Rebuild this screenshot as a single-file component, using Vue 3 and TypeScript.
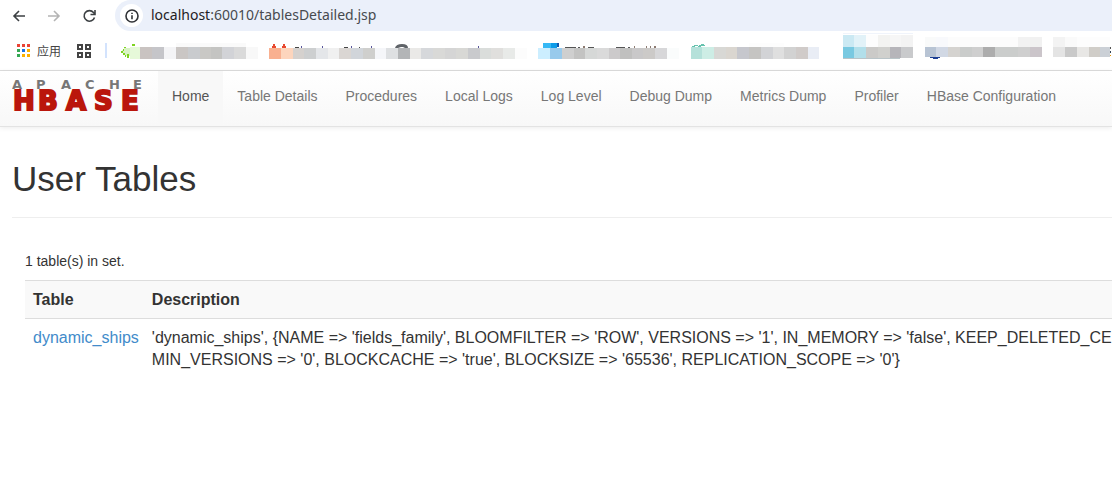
<script setup lang="ts">
interface Block {
  x: number
  y: number
  w: number
  h: number
  fill: string
}
interface Bookmark {
  label: string
  left: number
  width: number
  blocks: Block[]
}

function strip(edges: number[], colors: string[], y: number, h: number): Block[] {
  return colors.map((fill, i) => ({
    x: edges[i] - edges[0],
    y,
    w: edges[i + 1] - edges[i],
    h,
    fill,
  }))
}

const bookmarks: Bookmark[] = [
  {
    label: 'Bookmark 1', left: 121, width: 137,
    blocks: [
      { x: 55, y: 10, w: 70, h: 4, fill: '#fafafa' },
      ...strip(
        [121, 130, 140, 152, 164, 176, 188, 200, 211, 222, 234, 246, 258],
        ['none', '#e6f9d9', '#c9c3c1', '#c5c5c9', '#f4f4f6', '#cac6c4', '#c9cbce', '#c9c8c5', '#c4c4c2', '#d2d3d7', '#dadada', '#f8f8f8'],
        14, 12),
    ],
  },
  {
    label: 'Bookmark 2', left: 269, width: 258,
    blocks: strip(
      [269, 281, 293, 304, 316, 328, 339, 351, 363, 375, 386, 398, 410, 421, 433, 445, 456, 468, 480, 491, 503, 515, 527],
      ['#f9b090', '#fdd5bd', '#d5d1ce', '#cdcfd0', '#e4e6e9', '#f0f0f0', '#dad6d3', '#d1d5da', '#cfcfcd', '#f5f6f9', '#dee0e2', '#b3b5b7', '#eae9e7', '#d6d8db', '#d9d9d7', '#d5d5d5', '#d8d8d5', '#c9cacd', '#dadddb', '#e0dfdd', '#e8eae8', '#fcfcfc'],
      15, 11),
  },
  {
    label: 'Bookmark 3', left: 538, width: 141,
    blocks: strip(
      [538, 550, 562, 574, 585, 597, 609, 620, 632, 643, 655, 667, 679],
      ['#cceeff', '#98caec', '#cfcfcf', '#c3c3c2', '#d6d8d7', '#dadada', '#cccacb', '#c0c0bf', '#c9c8c9', '#cccac8', '#d7d7d9', '#fafcfc'],
      15, 11),
  },
  {
    label: 'Bookmark 4', left: 691, width: 128,
    blocks: [
      { x: 58, y: 10, w: 35, h: 4, fill: '#fdfdfd' },
      ...strip(
        [691, 702, 714, 726, 737, 749, 761, 773, 784, 796, 808, 819],
        ['#b5e1da', '#cdede5', '#d8d8d5', '#dad6d0', '#c6c7cd', '#c5c4c2', '#d2d3d6', '#dfdfdf', '#d2d2d2', '#d0cbc9', '#e9edf5'],
        14, 12),
    ],
  },
  {
    label: 'Bookmark 5', left: 843, width: 70,
    blocks: [
      { x: 0, y: 0, w: 70, h: 1, fill: '#f0f4fb' },
      ...strip([843, 854, 866, 878, 890, 901, 913], ['#cbe9f3', '#e2f2f8', '#fdfdfd', '#f3f3f1', '#f6f6f6', '#f3f3f3'], 2, 12),
      ...strip([843, 854, 866, 878, 890, 901, 913], ['#79c9e1', '#b2dfea', '#cbcac8', '#d0d0cd', '#b6b5ba', '#c9cacc'], 14, 11),
      { x: 0, y: 25, w: 57, h: 1, fill: '#b9c4c8' },
    ],
  },
  {
    label: 'Bookmark 6', left: 925, width: 117,
    blocks: [
      ...strip([925, 936, 948, 1018, 1030, 1042], ['#f9fafa', '#f8f9fc', '#fcfcfc', '#f2f2f2', '#f1f1f1'], 4, 10),
      ...strip(
        [925, 936, 948, 960, 972, 983, 995, 1018, 1030, 1042],
        ['#b8c4d4', '#d1d8e4', '#d5d3d0', '#cacccb', '#cfcfcf', '#adadad', '#cbcdcc', '#cfcfcf', '#cbc5ca'],
        14, 10),
    ],
  },
  {
    label: 'Bookmark 7', left: 1053, width: 59,
    blocks: [
      ...strip([1053, 1065, 1077, 1110], ['#f3f3f3', '#fafafa', '#fdfdfd'], 4, 10),
      ...strip([1053, 1065, 1077, 1089, 1100, 1110], ['#e4e4e4', '#c9c9c9', '#e8e7e5', '#d0cdc8', '#cbd0d6'], 14, 10),
      { x: 57, y: 14, w: 1, h: 2, fill: '#555' },
      { x: 57, y: 18, w: 1, h: 2, fill: '#345' },
      { x: 57, y: 22, w: 1, h: 1, fill: '#e90' },
    ],
  },
]

function gapBefore(i: number): number {
  return i === 0 ? 0 : bookmarks[i].left - bookmarks[i - 1].left - bookmarks[i - 1].width
}

const dots = ['#ea4335', '#ea4335', '#ea4335', '#34a853', '#1a73e8', '#fbb000', '#34a853', '#fbb000', '#fbb000']

const links = [
  'Home', 'Table Details', 'Procedures', 'Local Logs', 'Log Level',
  'Debug Dump', 'Metrics Dump', 'Profiler', 'HBase Configuration',
]
</script>

<template>
  <div class="page">
    <header class="toolbar">
      <button class="tool" type="button" aria-label="Back">
        <svg width="14" height="14" viewBox="0 0 14 14"><path d="M13 7H2M7 2 2 7l5 5" stroke="#3c4043" /></svg>
      </button>
      <button class="tool" type="button" aria-label="Forward">
        <svg width="14" height="14" viewBox="0 0 14 14"><path d="M1 7h11M7 2l5 5-5 5" stroke="#b4b4b4" /></svg>
      </button>
      <button class="tool" type="button" aria-label="Reload">
        <svg width="14" height="14" viewBox="0 0 14 14"><path d="M12.500 8.500A5.300 5.300 0 1 1 11.500 3.500L13 5M13 1v4.500H8.500" stroke="#3c4043" /></svg>
      </button>
      <div class="address">
        <button class="info" type="button" aria-label="Site information">
          <svg width="14" height="14" viewBox="0 0 14 14">
            <circle cx="7" cy="7" r="6" stroke="#303236" />
            <path d="M7 6.300V10.300M7 3.700v1.300" stroke="#303236" />
          </svg>
        </button>
        <div class="url"><span class="host">localhost</span>:60010/tablesDetailed.jsp</div>
      </div>
    </header>

    <nav class="bookmarks" aria-label="Bookmarks">
      <a href="#" class="apps">
        <svg width="13" height="13" viewBox="0 0 13 13">
          <rect v-for="(c, i) in dots" :key="i" :x="(i % 3) * 5" :y="Math.floor(i / 3) * 5" width="3" height="3" :fill="c" />
        </svg>
        <span>应用</span>
      </a>
      <button class="groups" type="button" aria-label="Tab groups">
        <svg width="14" height="14" viewBox="0 0 14 14">
          <path d="M1 1h4v4H1zM9 1h4v4H9zM1 9h4v4H1zM9 9h4v4H9z" stroke="#444" stroke-width="2" />
        </svg>
      </button>
      <span class="divider"></span>
      <a
        v-for="(b, i) in bookmarks" :key="b.label" href="#" class="mark"
        :aria-label="b.label" :style="{ marginLeft: gapBefore(i) + 'px' }"
      >
        <svg :width="b.width" height="28" :viewBox="`0 0 ${b.width} 28`" shape-rendering="crispEdges">
          <rect v-for="(r, k) in b.blocks" :key="k" :x="r.x" :y="r.y" :width="r.w" :height="r.h" :fill="r.fill" />
          <g v-if="i === 0">
            <path d="M3 15h6v8H5l-3-3-1-2z" fill="#d9f3c4" />
            <path d="M0 18h2v2H0zM2 16h1v2H2zM2 20h2v2H2zM4 22h1v2H4zM6 21h2v4H6zM11 11h3v2h-3zM3 14h2v1H3z" fill="#7ed321" />
          </g>
          <g v-if="i === 1">
            <path d="M4 11h2l1 4H3zM14 11h2l1 4h-4z" fill="#e8492f" />
            <path d="M26 14h4v1h-4zM75 14h4v1h-4zM90 14h1v1h-1z" fill="#444" />
            <path d="M32 13h1v2h-1zM53 13h1v2h-1zM82 13h1v2h-1zM102 13h1v2h-1zM209 13h1v2h-1z" fill="#57549a" />
            <path d="M126 15q1-4 7-4t6 4h-3l-2-1h-2l-3 1z" fill="#5f6368" shape-rendering="auto" />
          </g>
          <g v-if="i === 2">
            <path d="M5 10h8v5H5z" fill="#35b8f5" />
            <path d="M13 10h6v5h-6z" fill="#0c9be8" />
            <path d="M19 10h2v4h-2z" fill="#1259ae" />
            <path d="M27 14h11v1H27zM40 14h2v1h-2zM50 14h6v1h-6zM78 14h9v1h-9zM90 14h2v1h-2z" fill="#555" />
            <path d="M45 13h2v2h-2zM96 13h1v2h-1zM108 13h1v2h-1zM112 13h1v2h-1zM116 13h2v2h-2z" fill="#8c7a70" />
          </g>
          <path v-if="i === 3" d="M3 12h4v1H3zM1 13h3v1H1zM10 11h3v1h-3zM8 12h6v1H8zM7 13h3v1H7z" fill="#66c2ae" />
          <path v-if="i === 5" d="M5 24h10v1h-2v1H8v-1H5z" fill="#1c3f94" />
        </svg>
      </a>
    </nav>

    <nav class="navbar" aria-label="HBase">
      <a href="#" class="brand">
        <svg width="136" height="40" viewBox="0 0 136 40" role="img" aria-label="Apache HBase">
          <text class="apache" x="0 24 49 73 97 121" y="11">APACHE</text>
          <text class="hbase" x="1 26 54 82 109" y="32">HBASE</text>
        </svg>
      </a>
      <ul>
        <li v-for="(l, i) in links" :key="l"><a href="#" :class="{ active: i === 0 }">{{ l }}</a></li>
      </ul>
    </nav>

    <main>
      <h1>User Tables</h1>
      <section>
        <p>1 table(s) in set.</p>
        <table>
          <thead>
            <tr><th scope="col">Table</th><th scope="col">Description</th></tr>
          </thead>
          <tbody>
            <tr>
              <td><a href="#">dynamic_ships</a></td>
              <td>
                'dynamic_ships', {NAME =&gt; 'fields_family', BLOOMFILTER =&gt; 'ROW', VERSIONS =&gt; '1', IN_MEMORY =&gt; 'false', KEEP_DELETED_CELLS<br>
                MIN_VERSIONS =&gt; '0', BLOCKCACHE =&gt; 'true', BLOCKSIZE =&gt; '65536', REPLICATION_SCOPE =&gt; '0'}
              </td>
            </tr>
          </tbody>
        </table>
      </section>
    </main>
  </div>
</template>

<style>
body {
  margin: 0;
  background: #fff;
}
</style>

<style scoped>
.page {
  overflow: hidden;
  font-family: "Liberation Sans", Arial, sans-serif;
  font-size: 14px;
  line-height: 20px;
  color: #333;
}
svg {
  display: block;
  fill: none;
  flex: none;
}
button {
  display: flex;
  align-items: center;
  justify-content: center;
  padding: 0;
  border: 0;
  background: none;
}
a {
  text-decoration: none;
}
.toolbar {
  display: flex;
  align-items: center;
  height: 31px;
  padding-left: 12px;
}
.tool {
  width: 14px;
  margin-right: 21px;
}
.tool path,
.info circle,
.info path {
  stroke-width: 1.6;
}
.address {
  flex: 1;
  display: flex;
  align-items: center;
  height: 31px;
  padding-left: 5px;
  border-radius: 16px 0 0 16px;
  background: #ebf0fa;
  margin-left: -2px;
}
.info {
  width: 23px;
  height: 23px;
  border-radius: 50%;
  background: #fff;
}
.url {
  margin-left: 8px;
  font: 14px/18px "Noto Sans", sans-serif;
  padding-bottom: 2px;
  color: #474a4f;
}
.host {
  color: #1f2023;
}
.bookmarks {
  display: flex;
  align-items: center;
  height: 39px;
  padding-left: 17px;
  border-bottom: 1px solid #ddd;
}
.apps {
  display: flex;
  align-items: center;
  gap: 7px;
  width: 60px;
  font: 12px/16px "Noto Sans CJK SC", sans-serif;
  color: #444;
}
.divider {
  width: 2px;
  height: 15px;
  margin: 0 14px;
  background: #d3e3fd;
}
.mark {
  flex: none;
  align-self: flex-start;
  padding-top: 2px;
}
.navbar {
  display: flex;
  height: 55px;
  padding-left: 12px;
  border-bottom: 1px solid #e3e3e3;
  background: linear-gradient(#fff, #f8f8f8);
  box-shadow: 0 1px 5px rgba(0, 0, 0, 0.08);
}
.brand {
  width: 146px;
  padding-top: 7px;
}
.apache {
  font: bold 13px "DejaVu Sans", sans-serif;
  fill: #777;
}
.hbase {
  font: bold 26px "DejaVu Sans", sans-serif;
  fill: #ba160c;
  stroke: #ba160c;
  stroke-width: 2;
}
.navbar ul {
  display: flex;
  margin: 0;
  padding: 0;
  list-style: none;
}
.navbar li a {
  display: block;
  padding: 15px 14px 20px;
  white-space: nowrap;
  color: #777;
}
.navbar li a.active {
  color: #555;
  background: #f8f8f8;
}
main {
  padding: 32px 0 0 12px;
}
h1 {
  margin: 0;
  padding-bottom: 19px;
  border-bottom: 1px solid #eee;
  font-size: 35px;
  line-height: 39px;
  font-weight: 400;
}
section {
  padding: 33px 0 0 13px;
}
p {
  margin: 0 0 9px;
}
table {
  width: 100%;
  border-collapse: collapse;
  font-size: 16px;
  line-height: 22px;
  white-space: nowrap;
}
th,
td {
  padding: 8px 5px 7px 8px;
  border-top: 1px solid #ddd;
  text-align: left;
  vertical-align: top;
}
th {
  background: #f9f9f9;
}
td a {
  color: #428bca;
}
</style>
